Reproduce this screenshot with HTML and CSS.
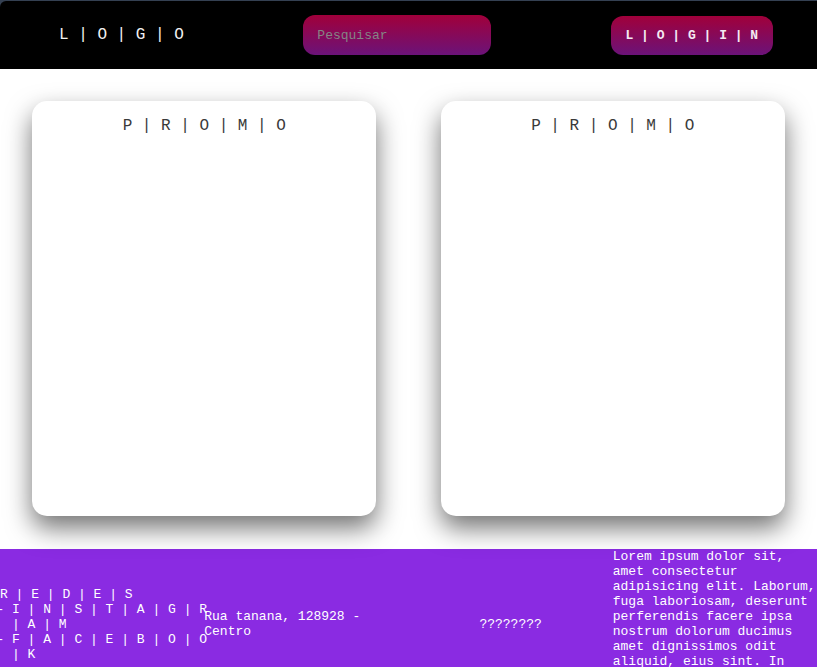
FILE: index.html
```html
<!DOCTYPE html>
<html lang="pt">
<head>
<meta charset="utf-8">
<title>Promo</title>
<link rel="stylesheet" href="styles.css">
</head>
<body>
<div class="frame">
  <header class="header">
    <div class="logo">L | O | G | O</div>
    <input class="search" type="text" placeholder="Pesquisar">
    <button class="login">L | O | G | I | N</button>
  </header>
</div>
<main class="main">
  <section class="card"><h2 class="card-title">P | R | O | M | O</h2></section>
  <section class="card"><h2 class="card-title">P | R | O | M | O</h2></section>
</main>
<footer class="footer">
  <div class="col col-social">
    <div class="social-title">R | E | D | E | S</div>
    <ul class="social-list">
      <li>I | N | S | T | A | G | R | A | M</li>
      <li>F | A | C | E | B | O | O | K</li>
    </ul>
  </div>
  <div class="col col-address">Rua tanana, 128928 - Centro</div>
  <div class="col col-mid">????????</div>
  <div class="col col-text">Lorem ipsum dolor sit, amet consectetur adipisicing elit. Laborum, fuga laboriosam, deserunt perferendis facere ipsa nostrum dolorum ducimus amet dignissimos odit aliquid, eius sint. In consequuntur voluptatem quos nihil.</div>
</footer>
</body>
</html>
```

FILE: styles.css
```css
html, body {
  margin: 0;
  padding: 0;
  background: #ffffff;
  font-family: "Liberation Mono", "Courier New", monospace;
}

.frame {
  background: #344052;
  padding-top: 1px;
}

.header {
  background: #000000;
  border-top-left-radius: 6px;
  height: 68px;
  display: flex;
  align-items: center;
  gap: 119.5px;
  padding-left: 59px;
}

.logo {
  color: #f2f2f2;
  font-size: 16px;
  white-space: nowrap;
}

.search {
  box-sizing: border-box;
  width: 188px;
  height: 40px;
  border: none;
  border-radius: 12px;
  padding: 0 14px;
  background: linear-gradient(to bottom, #a1003a, #6b1379);
  font-family: "Liberation Mono", "Courier New", monospace;
  font-size: 13px;
  color: #dddddd;
  outline: none;
}

.search::placeholder {
  color: #858585;
}

.login {
  box-sizing: border-box;
  width: 162px;
  height: 39px;
  border: none;
  border-radius: 12px;
  padding: 0;
  background: linear-gradient(to bottom, #a1003a, #6b1379);
  font-family: "Liberation Mono", "Courier New", monospace;
  font-size: 13px;
  font-weight: bold;
  color: #f4e8f2;
  white-space: nowrap;
}

.main {
  display: flex;
  justify-content: space-around;
  padding: 32px 0 33px;
}

.card {
  width: 344px;
  height: 415px;
  background: #ffffff;
  border-radius: 15px;
  box-shadow: 0 12px 26px rgba(0, 0, 0, 0.55);
}

.card-title {
  margin: 0;
  padding-top: 16px;
  text-align: center;
  font-size: 16px;
  font-weight: normal;
  line-height: 18px;
  color: #3a3a3a;
}

.footer {
  background: #8a2be2;
  color: #ffffff;
  font-size: 13px;
  display: flex;
  align-items: center;
}

.col {
  flex: 1 1 0;
  min-width: 0;
}

.social-title {
  white-space: nowrap;
}

.social-list {
  margin: 0 -4px 0 0;
  padding-left: 12px;
  list-style-type: "- ";
  list-style-position: outside;
}

.col-mid {
  text-align: center;
}
```
